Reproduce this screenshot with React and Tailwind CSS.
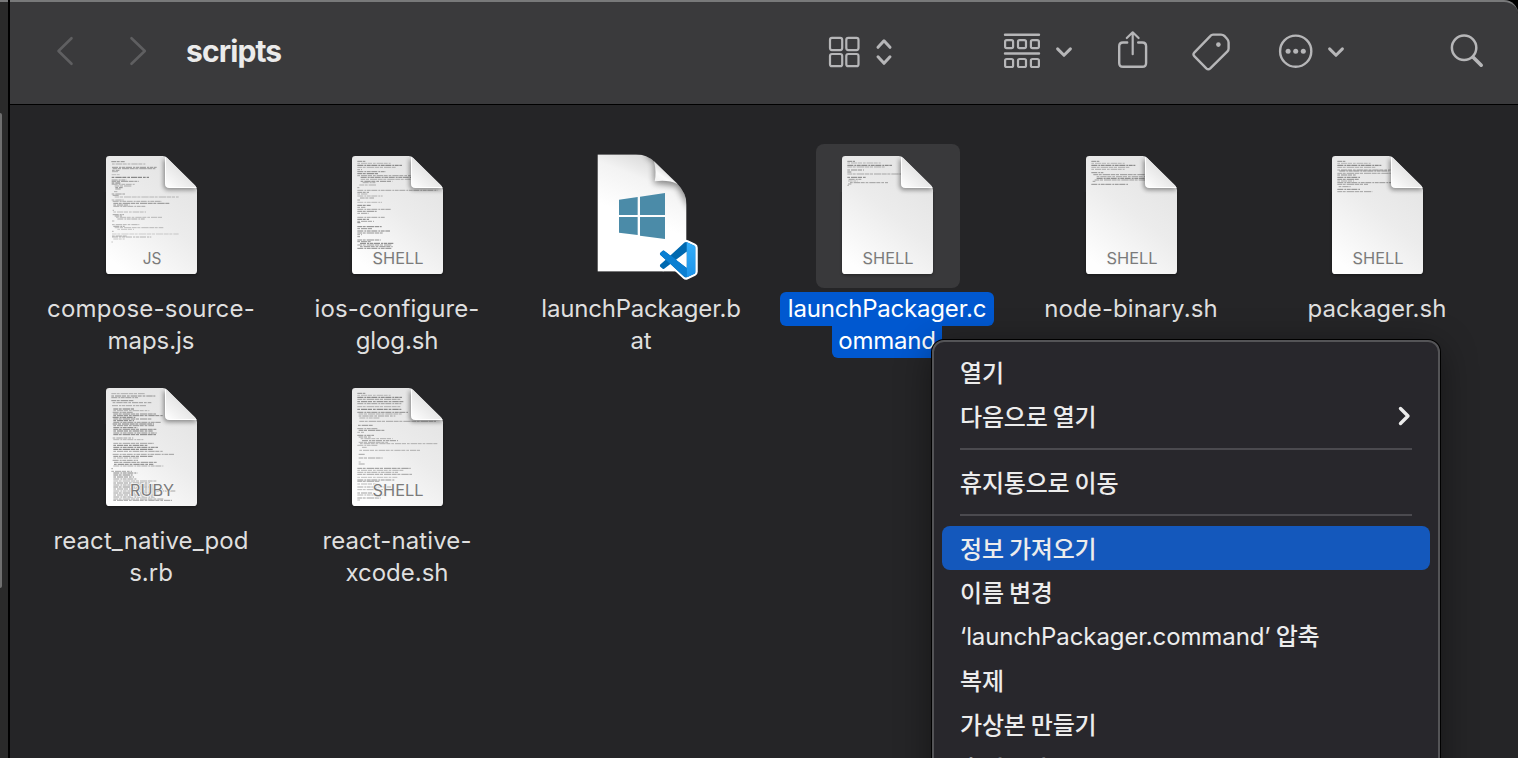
import React from "react";

/* Code preview rows for the document thumbnails: [y, x, width, opacity] */
const COMPOSE = [
  [17, 16, 40, 0.6], [24, 18, 100, 0.4], [34, 18, 134, 0.55], [38, 20, 128, 0.5], [43, 18, 22, 0.5], [47, 18, 18, 0.4],
  [56, 17, 24, 0.3], [64, 17, 112, 0.8], [72, 17, 44, 0.5], [76, 17, 82, 0.55], [81, 17, 26, 0.7], [85, 17, 70, 0.4],
  [90, 26, 50, 0.45], [95, 28, 22, 0.6], [99, 28, 16, 0.5], [107, 24, 10, 0.4], [114, 17, 40, 0.5], [118, 20, 18, 0.5],
  [123, 26, 192, 0.35], [132, 17, 36, 0.4], [136, 20, 148, 0.45], [142, 22, 168, 0.6], [147, 22, 48, 0.5], [151, 22, 96, 0.45],
  [163, 20, 4, 0.4], [168, 22, 98, 0.35], [176, 20, 34, 0.5], [180, 26, 22, 0.5], [184, 30, 138, 0.35], [189, 34, 82, 0.45],
  [195, 18, 7, 0.4], [206, 18, 82, 0.4], [211, 22, 34, 0.5], [215, 26, 146, 0.35], [220, 34, 50, 0.3], [226, 18, 5, 0.4],
  [234, 18, 200, 0.25], [240, 18, 44, 0.4], [243, 18, 118, 0.4], [249, 22, 34, 0.3], [258, 16, 5, 0.3],
];
const GLOG = [
  [16, 16, 24, 0.6], [22, 16, 100, 0.35], [28, 16, 134, 0.75], [34, 16, 115, 0.4], [41, 16, 14, 0.5], [47, 16, 85, 0.6],
  [53, 16, 62, 0.7], [59, 16, 160, 0.5], [64, 26, 160, 0.65], [70, 26, 150, 0.4], [76, 26, 95, 0.6], [80, 32, 38, 0.4],
  [87, 22, 50, 0.4], [95, 16, 6, 0.5], [103, 16, 240, 0.45], [109, 16, 35, 0.55], [114, 16, 30, 0.4], [120, 16, 76, 0.4],
  [126, 24, 42, 0.5], [132, 16, 8, 0.5], [139, 16, 74, 0.35], [148, 16, 40, 0.7], [154, 16, 24, 0.5], [160, 16, 100, 0.5],
  [166, 16, 58, 0.6], [172, 16, 34, 0.5], [184, 16, 84, 0.5], [190, 16, 35, 0.7], [196, 16, 50, 0.5], [200, 16, 9, 0.7],
  [212, 16, 73, 0.7], [218, 16, 45, 0.6], [225, 16, 98, 0.7], [231, 16, 76, 0.6], [236, 16, 14, 0.5], [242, 16, 8, 0.6],
  [252, 16, 70, 0.65], [257, 16, 40, 0.6], [262, 24, 100, 0.75], [267, 16, 102, 0.55], [272, 24, 98, 0.6], [277, 16, 104, 0.65],
];
const LAUNCH = [
  [16, 16, 23, 0.65], [21, 16, 100, 0.35], [28, 16, 134, 0.75], [33, 16, 112, 0.4], [42, 16, 50, 0.6], [48, 16, 12, 0.65],
  [54, 16, 162, 0.45], [64, 16, 58, 0.7], [70, 20, 38, 0.5], [75, 18, 30, 0.35], [80, 24, 114, 0.5], [84, 18, 10, 0.5], [88, 16, 5, 0.4],
];
const NODE = [
  [16, 16, 24, 0.6], [22, 16, 100, 0.35], [28, 16, 132, 0.75], [34, 16, 114, 0.4], [40, 16, 100, 0.4], [50, 16, 36, 0.6],
  [56, 22, 154, 0.55], [62, 32, 146, 0.45], [67, 32, 146, 0.7], [72, 26, 152, 0.5], [76, 20, 8, 0.5], [85, 16, 110, 0.6],
];
const PACKAGER = [
  [16, 16, 24, 0.6], [22, 16, 100, 0.35], [28, 16, 132, 0.75], [34, 16, 114, 0.4], [42, 16, 160, 0.5], [45, 22, 150, 0.6],
  [52, 16, 160, 0.45], [57, 16, 58, 0.6], [64, 16, 68, 0.7], [70, 16, 64, 0.6], [75, 16, 50, 0.4], [80, 16, 162, 0.55],
  [85, 16, 92, 0.5], [92, 20, 36, 0.5], [100, 16, 68, 0.65], [107, 16, 105, 0.5],
];
const PODS = [
  [17, 16, 100, 0.4], [24, 16, 132, 0.6], [29, 16, 80, 0.5], [38, 16, 68, 0.6], [44, 20, 116, 0.5], [53, 18, 102, 0.45],
  [63, 22, 62, 0.75], [68, 22, 108, 0.4], [73, 20, 60, 0.5], [78, 22, 128, 0.6], [83, 22, 148, 0.65], [88, 20, 68, 0.7],
  [93, 22, 114, 0.6], [98, 22, 62, 0.7], [103, 22, 142, 0.55], [108, 20, 124, 0.7], [113, 22, 122, 0.55], [119, 22, 72, 0.7],
  [124, 22, 130, 0.6], [129, 22, 118, 0.7], [135, 22, 130, 0.6], [140, 22, 128, 0.7], [150, 20, 62, 0.5], [155, 22, 90, 0.4],
  [166, 22, 122, 0.5], [172, 22, 102, 0.7], [178, 22, 134, 0.7], [184, 22, 120, 0.75], [190, 22, 148, 0.5], [199, 20, 184, 0.5],
  [205, 22, 120, 0.65], [210, 22, 76, 0.4], [217, 20, 76, 0.55], [223, 24, 128, 0.6], [229, 24, 118, 0.7], [234, 22, 150, 0.45],
  [242, 16, 5, 0.5], [250, 16, 62, 0.5], [255, 22, 72, 0.7], [261, 22, 58, 0.7], [267, 22, 62, 0.65], [273, 22, 70, 0.55],
  [279, 22, 130, 0.45], [285, 22, 110, 0.6], [291, 22, 120, 0.55], [297, 22, 128, 0.65], [303, 22, 150, 0.55], [309, 22, 188, 0.5],
  [315, 22, 130, 0.6], [321, 22, 145, 0.55], [327, 22, 124, 0.6], [333, 22, 150, 0.5], [337, 22, 176, 0.55],
];
const XCODE = [
  [16, 16, 24, 0.6], [22, 16, 100, 0.35], [28, 16, 134, 0.75], [34, 16, 132, 0.5], [41, 16, 140, 0.65], [47, 16, 132, 0.5],
  [56, 16, 132, 0.4], [64, 16, 132, 0.75], [73, 16, 152, 0.6], [78, 20, 130, 0.4], [84, 20, 110, 0.5], [90, 22, 60, 0.4],
  [100, 22, 230, 0.45], [112, 18, 44, 0.6], [122, 16, 60, 0.5], [127, 20, 78, 0.6], [133, 16, 20, 0.4], [142, 16, 50, 0.6],
  [147, 20, 36, 0.5], [152, 26, 96, 0.4], [158, 30, 108, 0.55], [163, 20, 88, 0.4], [167, 24, 232, 0.4], [172, 16, 60, 0.4],
  [178, 30, 16, 0.4], [187, 22, 182, 0.4], [199, 20, 20, 0.5], [210, 20, 72, 0.5], [222, 20, 6, 0.4], [228, 20, 20, 0.5],
  [241, 16, 160, 0.6], [247, 16, 140, 0.4], [253, 16, 122, 0.45], [259, 16, 164, 0.5], [268, 16, 120, 0.35], [276, 16, 112, 0.6],
  [280, 16, 68, 0.5], [288, 16, 60, 0.4], [297, 16, 110, 0.5], [305, 16, 92, 0.4], [315, 16, 50, 0.55], [321, 16, 80, 0.45], [330, 16, 70, 0.55], [336, 16, 10, 0.4],
];

const FILES = [
  { lines: [["compose-source-", "tracking-[0.22px]"], ["maps.js", "tracking-[-0.05px]"]], kind: "JS", rows: COMPOSE },
  { lines: [["ios-configure-", "tracking-[0.1px]"], ["glog.sh", "tracking-[-0.1px]"]], kind: "SHELL", rows: GLOG },
  { lines: [["launchPackager.b", "tracking-[-0.2px]"], ["at", "tracking-[-0.2px]"]], kind: "BAT" },
  { lines: [["launchPackager.c", "tracking-[-0.2px]"], ["ommand", "tracking-[-0.2px]"]], kind: "SHELL", rows: LAUNCH, selected: true },
  { lines: [["node-binary.sh", "tracking-[0.1px]"]], kind: "SHELL", rows: NODE },
  { lines: [["packager.sh", "tracking-[0px]"]], kind: "SHELL", rows: PACKAGER },
  { lines: [["react_native_pod", "tracking-[0.1px]"], ["s.rb", "tracking-[0px]"]], kind: "RUBY", rows: PODS },
  { lines: [["react-native-", "tracking-[0.1px]"], ["xcode.sh", "tracking-[0px]"]], kind: "SHELL", rows: XCODE },
];

function DocIcon({ kind, rows, id }) {
  return (
    <svg className="block h-36 w-36" viewBox="-78 -36 432 432">
      <defs>
        <linearGradient id={`page${id}`} x1="0.85" y1="0" x2="0.25" y2="1">
          <stop offset="0" stopColor="#e2e2e2" />
          <stop offset="0.5" stopColor="#ececec" />
          <stop offset="1" stopColor="#fefefe" />
        </linearGradient>
        <linearGradient id={`fold${id}`} x1="0.5" y1="0.5" x2="0.05" y2="1">
          <stop offset="0" stopColor="#e6e6e6" />
          <stop offset="0.6" stopColor="#f4f4f4" />
          <stop offset="1" stopColor="#ffffff" />
        </linearGradient>
        <clipPath id={`clip${id}`}>
          <path d="M10 0H170Q178 0 184 6L267 88Q273 94 273 102V344Q273 354 263 354H10Q0 354 0 344V10Q0 0 10 0Z" />
        </clipPath>
        <filter id={`soft${id}`} x="-30%" y="-30%" width="160%" height="160%">
          <feGaussianBlur stdDeviation="7" />
        </filter>
        <filter id={`shade${id}`} x="-10%" y="-10%" width="120%" height="120%">
          <feGaussianBlur stdDeviation="4" />
        </filter>
      </defs>
      <rect x="0" y="8" width="273" height="350" rx="10" fill="#000" opacity="0.35" filter={`url(#shade${id})`} clipPath="none" className={"[clip-path:inset(100px_-20px_-20px_-20px)]"} />
      <g clipPath={`url(#clip${id})`}>
        <rect width="273" height="354" fill={`url(#page${id})`} />
        {rows.map(([y, x, w, o], i) => (
          <line
            key={i}
            x1={x}
            x2={x + w}
            y1={y}
            y2={y}
            stroke="#4a4a4a"
            strokeWidth="2.8"
            strokeDasharray={i % 3 === 0 ? "14 2 9 3 22 2" : i % 3 === 1 ? "8 3 19 2 12 3" : "18 3 6 2 11 2"}
            opacity={o}
          />
        ))}
        <path d="M172 6V90Q174 102 186 103H274L262 84Z" fill="#000" opacity="0.38" filter={`url(#soft${id})`} />
        <path d="M178 0V85Q178 95 188 95H275Z" fill={`url(#fold${id})`} />
        <path d="M178.500 4V85Q178.500 94.500 188 94.500H272" fill="none" stroke="#fff" strokeWidth="3" />
      </g>
      <text x="138" y="324" textAnchor="middle" fontSize="49" fill="#7b7b7b" className="font-[Inter,sans-serif]" textLength={kind === "JS" ? 56 : kind === "RUBY" ? 132 : 153} lengthAdjust="spacingAndGlyphs" stroke="#f6f6f6" strokeWidth="5" paintOrder="stroke">
        {kind}
      </text>
    </svg>
  );
}

const CODE_PATH =
  "M23.15 2.587L18.21.21a1.494 1.494 0 0 0-1.705.29l-9.46 8.63-4.12-3.128a.999.999 0 0 0-1.276.057L.327 7.261A1 1 0 0 0 .326 8.74L3.899 12 .326 15.26a1 1 0 0 0 .001 1.479L1.65 17.94a.999.999 0 0 0 1.276.057l4.12-3.128 9.46 8.63a1.492 1.492 0 0 0 1.704.29l4.942-2.377A1.5 1.5 0 0 0 24 20.06V3.939a1.5 1.5 0 0 0-.85-1.352zm-5.146 14.861L10.826 12l7.178-5.448v10.896z";

function BatIcon() {
  return (
    <svg className="block h-36 w-36" viewBox="120 12 432 432">
      <defs>
        <linearGradient id="batPage" x1="0.45" y1="0" x2="0.3" y2="0.5">
          <stop offset="0" stopColor="#dcdcdc" />
          <stop offset="0.35" stopColor="#f3f3f3" />
          <stop offset="1" stopColor="#ffffff" />
        </linearGradient>
        <linearGradient id="batFold" x1="0.6" y1="0.3" x2="0.1" y2="1">
          <stop offset="0" stopColor="#cfcfcf" />
          <stop offset="0.5" stopColor="#fafafa" />
          <stop offset="1" stopColor="#f0f0f0" />
        </linearGradient>
        <linearGradient id="codeSide" x1="0" y1="0" x2="0" y2="1">
          <stop offset="0" stopColor="#35aef8" />
          <stop offset="1" stopColor="#1b93ea" />
        </linearGradient>
        <clipPath id="batClip">
          <path d="M202 43H318Q350 43 374 66L440 129Q470 160 470 195V395H202Z" />
        </clipPath>
        <clipPath id="codeClip">
          <path d={CODE_PATH} />
        </clipPath>
        <filter id="batBlur" x="-30%" y="-30%" width="160%" height="160%">
          <feGaussianBlur stdDeviation="10" />
        </filter>
      </defs>
      <g clipPath="url(#batClip)">
        <rect x="202" y="43" width="268" height="352" fill="url(#batPage)" />
        <path d="M345 43L372 68L372 130L440 138L480 210V120L380 30Z" fill="#000" opacity="0.42" filter="url(#batBlur)" />
      </g>
      <path d="M372 64Q380 96 374 124Q414 118 442 132Z" fill="url(#batFold)" />
      <g fill="#4b8ba8">
        <path d="M267 179L323 171V225H267Z" />
        <path d="M330 170L405 159V225H330Z" />
        <path d="M267 231H323V285L267 278Z" />
        <path d="M330 231H405V297L330 287Z" />
      </g>
      <g transform="translate(389.500 305.500) scale(4.480)">
        <path d={CODE_PATH} fill="#fff" stroke="#fff" strokeWidth="2.800" strokeLinejoin="round" />
        <path d="M10.800 12L18 6.550V17.450Z" fill="#fff" />
        <g clipPath="url(#codeClip)">
          <rect width="24" height="24" fill="#0069b0" />
          <path d="M0 8L2.500 5.500L18 17.300V24H16.500L7 14.870L0 8.500Z" fill="#0a7fd2" />
          <rect x="18" width="6" height="24" fill="url(#codeSide)" />
        </g>
      </g>
    </svg>
  );
}

function FileItem({ file, id }) {
  return (
    <div className="flex h-[232px] w-[246px] flex-col">
      <div className={`ml-[52px] h-36 w-36 shrink-0 rounded-lg ${file.selected ? "bg-[#39393b]" : ""}`}>
        {file.kind === "BAT" ? <BatIcon /> : <DocIcon kind={file.kind} rows={file.rows} id={id} />}
      </div>
      <div className="mt-1 flex flex-col items-center text-2xl leading-8 font-normal text-[#dfdfdf]">
        {file.lines.map(([text, tracking], i) => (
          <div
            key={text}
            className={`flex justify-center whitespace-nowrap ${tracking} ${
              file.selected
                ? i === 0
                  ? "h-[34px] w-[214px] rounded-md bg-[#0058d0] pt-px text-white"
                  : "h-8 w-[110px] rounded-b-md bg-[#0058d0] text-white"
                : i === 0
                  ? "h-[34px] pt-px"
                  : "h-8"
            }`}
          >
            <span className={file.selected && i === 1 ? "-mt-px" : i === 1 ? "-mt-px" : ""}>{text}</span>
          </div>
        ))}
      </div>
    </div>
  );
}

const stroke = { fill: "none", stroke: "#b6b6b8", strokeLinecap: "round", strokeLinejoin: "round" };

function Toolbar() {
  return (
    <header className="flex h-[105px] items-start rounded-tr-[14px] border-t-2 border-b border-t-[#78797a] border-b-black bg-[#3a3a3c] pt-[28px]">
      <svg className="ml-[40px] h-[42px] w-[30px]" viewBox="50 30 30 42" {...stroke} stroke="#5f5f61" strokeWidth="2.6">
        <path d="M71.500 38.200L58.500 51L71.500 63.800" />
      </svg>
      <svg className="ml-[45px] h-[42px] w-[30px]" viewBox="125 30 30 42" {...stroke} stroke="#5f5f61" strokeWidth="2.6">
        <path d="M131.500 38.200L144.800 51L131.500 63.800" />
      </svg>
      <h1 className="ml-[31px] w-[120px] text-[30px] leading-[42px] font-bold tracking-[-0.9px] text-[#ebebeb]">scripts</h1>
      <svg className="ml-[519px] h-[42px] w-[70px]" viewBox="825 30 70 42" {...stroke} strokeWidth="2.2">
        <rect x="830" y="37.900" width="12.200" height="12.200" rx="2" />
        <rect x="846.300" y="37.900" width="12.200" height="12.200" rx="2" />
        <rect x="830" y="54" width="12.200" height="12.200" rx="2" />
        <rect x="846.300" y="54" width="12.200" height="12.200" rx="2" />
        <path d="M878 47.300L884 40.800L890 47.300M878 56.800L884 63.300L890 56.800" strokeWidth="3" />
      </svg>
      <svg className="ml-[105px] h-[42px] w-[80px]" viewBox="1000 30 80 42" {...stroke} strokeWidth="2.2">
        <path d="M1005 34.700H1039M1005 53.500H1039" strokeWidth="2.4" />
        <rect x="1005.100" y="40.100" width="8" height="8" rx="1.600" />
        <rect x="1018" y="40.100" width="8" height="8" rx="1.600" />
        <rect x="1030.900" y="40.100" width="8" height="8" rx="1.600" />
        <rect x="1005.100" y="59" width="8" height="8" rx="1.600" />
        <rect x="1018" y="59" width="8" height="8" rx="1.600" />
        <rect x="1030.900" y="59" width="8" height="8" rx="1.600" />
        <path d="M1057.600 48.900L1064 55.300L1070.400 48.900" strokeWidth="3" />
      </svg>
      <svg className="ml-[32px] h-[42px] w-[40px]" viewBox="1112 30 40 42" {...stroke} strokeWidth="2.4">
        <path d="M1127.200 42.500H1123Q1119.200 42.500 1119.200 46.300V63Q1119.200 66.800 1123 66.800H1142.300Q1146.100 66.800 1146.100 63V46.300Q1146.100 42.500 1142.300 42.500H1138.200" />
        <path d="M1132.700 54.200V32.500M1126.800 38L1132.700 32.300L1138.600 38" strokeWidth="2.2" />
      </svg>
      <svg className="ml-[36px] h-[42px] w-[46px]" viewBox="1188 30 46 42" {...stroke} strokeWidth="2.4">
        <path d="M1213 34.600H1221Q1223 34.600 1224.500 36L1227 38.800Q1228.600 40.500 1228.600 42.500V48.500Q1228.600 50.300 1227.200 51.700L1210.300 68.300Q1208.300 70.200 1206.300 68.300L1194.500 56.400Q1192.500 54.400 1194.500 52.400L1210.500 35.800Q1211.500 34.600 1213 34.600Z" />
        <circle cx="1218.400" cy="44.600" r="2.300" fill="#b6b6b8" stroke="none" />
      </svg>
      <svg className="ml-[41px] h-[42px] w-[75px]" viewBox="1275 30 75 42" {...stroke} strokeWidth="2.4">
        <circle cx="1295.700" cy="51.200" r="15.600" />
        <g fill="#b6b6b8" stroke="none">
          <circle cx="1288.100" cy="51.200" r="2.500" />
          <circle cx="1295.700" cy="51.200" r="2.500" />
          <circle cx="1303.300" cy="51.200" r="2.500" />
        </g>
        <path d="M1329.600 48.900L1336 55.300L1342.400 48.900" strokeWidth="3" />
      </svg>
      <svg className="ml-[95px] h-[42px] w-[45px]" viewBox="1445 30 45 42" {...stroke} strokeWidth="2.5">
        <circle cx="1464.100" cy="47.800" r="12.200" />
        <path d="M1473.400 57.400L1481.200 65.200" strokeWidth="3.600" />
      </svg>
    </header>
  );
}

const MENU = [
  { text: "열기" },
  { text: "다음으로 열기", arrow: true },
  null,
  { text: "휴지통으로 이동" },
  null,
  { text: "정보 가져오기", active: true },
  { text: "이름 변경" },
  { latin: "‘launchPackager.command’", text: " 압축" },
  { text: "복제" },
  { text: "가상본 만들기" },
  { text: "훑어보기" },
];

function ContextMenu() {
  return (
    <div className="absolute top-[340px] left-[932px] h-[480px] w-[508px] rounded-xl border-2 border-[#545457] bg-[#28272c] px-2 pt-2 shadow-[0_0_0_1px_#000,0_8px_36px_rgba(0,0,0,0.45)]">
      {MENU.map((item, i) =>
        item === null ? (
          <div key={i} className="flex h-[22px] items-center px-[18px]">
            <div className="h-0.5 w-full bg-[#4b4a4f]" />
          </div>
        ) : (
          <div
            key={i}
            className={`flex h-11 items-center justify-between rounded-lg pr-[18px] pl-[18px] text-2xl font-medium whitespace-pre text-[#ececec] ${item.active ? "bg-[#1458bc]" : ""}`}
          >
            <span className="font-['Noto_Sans_CJK_KR',sans-serif] leading-[44px] tracking-[-0.2px]">
              {item.latin && <span className="font-[Inter,sans-serif] font-normal tracking-[-0.1px]">{item.latin}</span>}
              {item.text}
            </span>
            {item.arrow && (
              <svg className="h-6 w-4" viewBox="0 0 16 24" fill="none" stroke="#ececec" strokeWidth="3.400" strokeLinecap="round" strokeLinejoin="round">
                <path d="M4.500 4.500L12 12L4.500 19.500" />
              </svg>
            )}
          </div>
        ),
      )}
    </div>
  );
}

export default function App() {
  return (
    <div className="relative flex h-[758px] w-[1518px] overflow-hidden bg-black font-[Inter,sans-serif]">
      <aside className="h-full w-2 shrink-0 border-t-2 border-[#78797a] bg-[#2a2a2a] pt-[111px]">
        <div className="h-[475px] w-0.5 rounded-r-sm bg-[#6f6f6f]" />
      </aside>
      <div className="ml-0.5 flex h-full w-[1508px] flex-col">
        <Toolbar />
        <main className="grid flex-1 grid-cols-[246px_244px_246px_244px_246px_244px] content-start bg-[#252527] pt-[39px] pl-[18px]">
          {FILES.map((file, i) => (
            <FileItem key={i} file={file} id={i} />
          ))}
        </main>
      </div>
      <ContextMenu />
    </div>
  );
}
